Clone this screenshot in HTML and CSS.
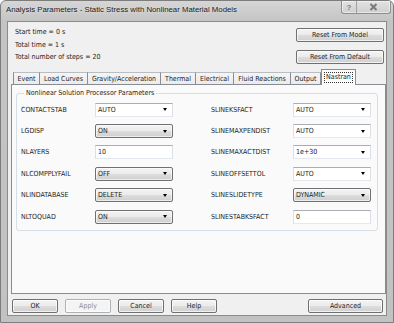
FILE: index.html
```html
<!DOCTYPE html>
<html>
<head>
<meta charset="utf-8">
<link rel="stylesheet" href="styles.css">
</head>
<body>
<div class="window">
  <div class="titlebar">
    <span class="title">Analysis Parameters - Static Stress with Nonlinear Material Models</span>
    <div class="caption-btns">
      <span class="cap-btn help">?</span>
      <span class="cap-btn close"><svg width="9" height="8" viewBox="0 0 9 8"><path d="M1.5 1 L7.5 7 M7.5 1 L1.5 7" stroke="#7a7a7a" stroke-width="2" fill="none"/></svg></span>
    </div>
  </div>
  <div class="client">
    <div class="header">
      <div class="info">
        <div>Start time = 0 s</div>
        <div>Total time = 1 s</div>
        <div>Total number of steps = 20</div>
      </div>
      <div class="reset-btns">
        <div class="btn reset">Reset From Model</div>
        <div class="btn reset">Reset From Default</div>
      </div>
    </div>
    <div class="tabs">
      <div class="tab">Event</div>
      <div class="tab">Load Curves</div>
      <div class="tab">Gravity/Acceleration</div>
      <div class="tab">Thermal</div>
      <div class="tab">Electrical</div>
      <div class="tab">Fluid Reactions</div>
      <div class="tab">Output</div>
      <div class="tab selected"><span class="focus">Nastran</span></div>
    </div>
    <div class="pane">
      <fieldset class="group">
        <legend>Nonlinear Solution Processor Parameters</legend>
        <div class="cols">
          <div class="col col-left">
            <span class="lbl">CONTACTSTAB</span><div class="ctl combo-edit"><span>AUTO</span><i class="arrow"></i></div>
            <span class="lbl">LGDISP</span><div class="ctl combo-list"><span>ON</span><i class="arrow"></i></div>
            <span class="lbl">NLAYERS</span><div class="ctl textbox"><span>10</span></div>
            <span class="lbl">NLCOMPPLYFAIL</span><div class="ctl combo-list"><span>OFF</span><i class="arrow"></i></div>
            <span class="lbl">NLINDATABASE</span><div class="ctl combo-list"><span>DELETE</span><i class="arrow"></i></div>
            <span class="lbl">NLTOQUAD</span><div class="ctl combo-list"><span>ON</span><i class="arrow"></i></div>
          </div>
          <div class="col col-right">
            <span class="lbl">SLINEKSFACT</span><div class="ctl combo-edit"><span>AUTO</span><i class="arrow"></i></div>
            <span class="lbl">SLINEMAXPENDIST</span><div class="ctl combo-edit"><span>AUTO</span><i class="arrow"></i></div>
            <span class="lbl">SLINEMAXACTDIST</span><div class="ctl combo-edit"><span>1e+30</span><i class="arrow"></i></div>
            <span class="lbl">SLINEOFFSETTOL</span><div class="ctl combo-edit"><span>AUTO</span><i class="arrow"></i></div>
            <span class="lbl">SLINESLIDETYPE</span><div class="ctl combo-list"><span>DYNAMIC</span><i class="arrow"></i></div>
            <span class="lbl">SLINESTABKSFACT</span><div class="ctl textbox"><span>0</span></div>
          </div>
        </div>
      </fieldset>
    </div>
    <div class="footer">
      <div class="btn small">OK</div>
      <div class="btn small disabled">Apply</div>
      <div class="btn small">Cancel</div>
      <div class="btn small">Help</div>
      <div class="btn adv">Advanced</div>
    </div>
  </div>
</div>
</body>
</html>
```

FILE: styles.css
```css
* { box-sizing: border-box; }
html, body { margin: 0; padding: 0; }
body {
  width: 394px;
  height: 323px;
  font-family: "DejaVu Sans Condensed", "Liberation Sans", sans-serif;
  font-size: 7px;
  color: #222222;
  background: #ffffff;
}
.window {
  width: 394px;
  height: 323px;
  border: 1px solid #7d7d7d;
  border-radius: 6px 6px 0 0;
  background: linear-gradient(#d6d6d6, #c4c4c4 20px, #c2c2c2);
  display: flex;
  flex-direction: column;
}
.titlebar {
  height: 20px;
  display: flex;
  align-items: flex-start;
  padding-left: 5px;
}
.title {
  font-family: "Liberation Sans", sans-serif;
  font-size: 7.8px;
  line-height: 18px;
  color: #1a1a1a;
  text-shadow: 0 0 3px #e8e8e8;
  white-space: nowrap;
}
.caption-btns {
  margin-left: auto;
  margin-right: 2px;
  display: flex;
  height: 13px;
  border: 1px solid #8e8e8e;
  border-top: none;
  border-radius: 0 0 3px 3px;
  background: linear-gradient(#e2e2e2, #cfcfcf);
  box-shadow: inset 0 0 0 1px rgba(255,255,255,0.5);
}
.cap-btn {
  display: flex;
  align-items: center;
  justify-content: center;
  height: 12px;
  color: #7a7a7a;
  font-family: "Liberation Sans", sans-serif;
  font-weight: bold;
  font-size: 8px;
}
.help { width: 15px; border-right: 1px solid #a0a0a0; }
.close { width: 33px; }
.client {
  margin: 0 6px 6px 6px;
  height: 295px;
  border: 1px solid #8b8b8b;
  background: #f0f0f0;
  display: flex;
  flex-direction: column;
}
.header {
  height: 44px;
  padding: 4px 2px 0 7px;
  display: flex;
  justify-content: space-between;
}
.info { line-height: 12.5px; }
.reset-btns {
  display: flex;
  flex-direction: column;
  gap: 8px;
  margin-top: 2px;
}
.btn {
  height: 14px;
  border: 1px solid #707070;
  border-radius: 2px;
  background: linear-gradient(#f3f3f3, #ebebeb 50%, #dddddd 51%, #d0d0d0);
  box-shadow: inset 0 0 0 1px rgba(255,255,255,0.7);
  display: flex;
  align-items: center;
  justify-content: center;
  color: #1e1e1e;
  white-space: nowrap;
}
.reset { width: 88px; }
.small { width: 46px; }
.adv { width: 75px; margin-left: auto; }
.disabled {
  border-color: #adb2b5;
  background: #f4f4f4;
  color: #8b8b8b;
}
.tabs {
  height: 18px;
  margin-left: 5px;
  display: grid;
  grid-template-columns: 27px 48px 73px 35px 38px 57px 30px 35px;
  align-items: end;
  position: relative;
  z-index: 1;
}
.tab {
  height: 12px;
  border-top: 1px solid #b9bcc2;
  border-right: 1px solid #898c95;
  background: linear-gradient(#f5f5f5, #ebebeb);
  display: flex;
  align-items: center;
  justify-content: center;
  white-space: nowrap;
  padding-top: 1px;
}
.tab:first-child { border-left: 1px solid #898c95; }
.tab.selected {
  height: 16px;
  margin-bottom: -1px;
  border: 1px solid #898c95;
  border-bottom: none;
  background: #fbfbfb;
  padding-top: 0;
  padding-bottom: 1px;
}
.focus {
  outline: 1px dotted #333;
  padding: 0 1px;
  line-height: 9px;
}
.pane {
  height: 210px;
  margin-left: 3px;
  border: 1px solid #898c95;
  background: #fafafa;
  padding: 4px 7px 0 4px;
}
.group {
  margin: 0;
  padding: 2px 6px 3px 4px;
  border: 1px solid #d5dfe5;
  border-radius: 3px;
  min-inline-size: 0;
}
.group legend {
  padding: 0 2px;
  margin-left: 3px;
  line-height: 8px;
}
.cols {
  display: flex;
  gap: 38px;
}
.col {
  display: grid;
  grid-auto-rows: 21.4px;
  align-items: center;
}
.col-left { grid-template-columns: 74px 78px; }
.col-right { grid-template-columns: 82px 78px; }
.lbl { white-space: nowrap; }
.ctl {
  height: 14px;
  display: flex;
  align-items: center;
  padding-left: 2px;
  position: relative;
}
.ctl span { flex: 1; }
.combo-edit, .textbox {
  background: #ffffff;
  border: 1px solid #dbdfe6;
  border-top-color: #abadb3;
  border-bottom-color: #e3e9ef;
}
.combo-list {
  border: 1px solid #707070;
  border-radius: 2px;
  background: linear-gradient(#f3f3f3, #ebebeb 50%, #dddddd 51%, #cfcfcf);
  box-shadow: inset 0 0 0 1px rgba(255,255,255,0.6);
}
.arrow {
  width: 0;
  height: 0;
  border-left: 2.5px solid transparent;
  border-right: 2.5px solid transparent;
  border-top: 3px solid #000;
  margin-right: 5px;
}
.footer {
  margin-top: 5px;
  height: 14px;
  padding: 0 3px 0 4px;
  display: flex;
  gap: 7px;
}
```
